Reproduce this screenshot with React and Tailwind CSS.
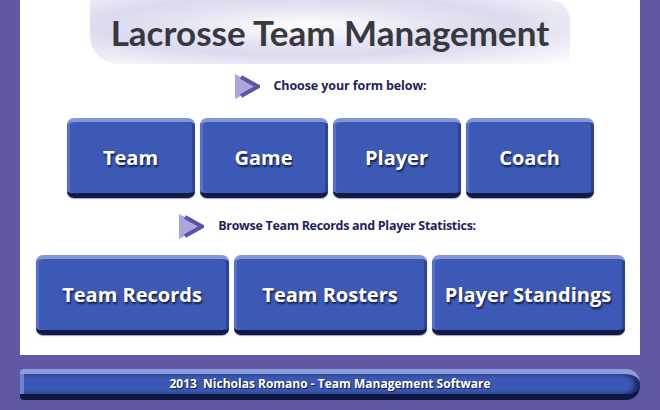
import React from 'react';

const Arrow = () => (
    <svg width="27" height="27" viewBox="0 0 27 27" className="shrink-0">
        <polygon points="2,1 26,13.5 2,26" fill="#aaa7dd" />
        <polyline points="8,4 25,13.5 8,23" fill="none" stroke="#5a54a6" strokeWidth="4" strokeLinejoin="miter" />
    </svg>
);

const BigButton = ({ label, width }) => (
    <button
        className={`${width} h-[80px] rounded-[7px] bg-[#3c5ab5] border-t-[4px] border-t-[#8498d9] border-b-[5px] border-b-[#121a45] shadow-[inset_3px_0_0_#5570c6,inset_-3px_0_0_#2c4592,0_1px_1px_#9aa0c8] flex items-center justify-center text-white font-bold text-[20px] [text-shadow:1px_2px_2px_#141a48]`}
        style={{ fontFamily: '"Open Sans", sans-serif' }}
    >
        {label}
    </button>
);

const SectionHeading = ({ text, gap, tracking }) => (
    <div className="flex items-center justify-center">
        <Arrow />
        <span className={`${gap} ${tracking} text-[12.5px] font-bold text-[#251d5c]`} style={{ fontFamily: '"Open Sans", sans-serif' }}>
            {text}
        </span>
    </div>
);

export default function App() {
    const forms = ['Team', 'Game', 'Player', 'Coach'];
    const browse = ['Team Records', 'Team Rosters', 'Player Standings'];

    return (
        <div className="w-[660px] h-[410px] bg-[#5f58a3] px-5 overflow-hidden" style={{ fontFamily: '"Open Sans", sans-serif' }}>
            <div className="h-[355px] bg-white flex flex-col items-center">
                {/* title banner */}
                <div className="w-[480px] h-[64px] shrink-0 rounded-bl-[28px] rounded-tr-[20px] bg-[radial-gradient(ellipse_at_45%_40%,#ffffff_0%,#e4e3f2_35%,#dcdbee_55%,#ffffff_100%)] flex items-center justify-center">
                    <h1 className="whitespace-nowrap text-[35px] font-bold text-[#38383f] leading-none pt-[1px]" style={{ fontFamily: 'Lato, sans-serif' }}>
                        Lacrosse Team Management
                    </h1>
                </div>

                <div className="mt-[9px]">
                    <SectionHeading text="Choose your form below:" gap="ml-[13px]" tracking="tracking-[-0.1px]" />
                </div>

                <div className="mt-[18px] flex gap-[5px]">
                    {forms.map(f => <BigButton key={f} label={f} width="w-[128px]" />)}
                </div>

                <div className="mt-[15px] mr-[7px]">
                    <SectionHeading text="Browse Team Records and Player Statistics:" gap="ml-[14px]" tracking="tracking-[-0.3px]" />
                </div>

                <div className="mt-[15px] flex gap-[5px]">
                    {browse.map(b => <BigButton key={b} label={b} width="w-[193px]" />)}
                </div>
            </div>

            {/* footer bar */}
            <div className="mt-[14px] h-[31px] rounded-l-[4px] rounded-r-[14px] bg-[#3b59b4] border-t-[5px] border-t-[#8c9ddb] border-b-[6px] border-b-[#10173f] shadow-[inset_4px_0_0_#6e84cf,inset_-6px_0_4px_#1d2c6a] flex items-center justify-center">
                <span className="text-white font-bold text-[12px] [text-shadow:1px_1px_1px_#141a48]">
                    2013&nbsp; Nicholas Romano - Team Management Software
                </span>
            </div>
        </div>
    );
}
